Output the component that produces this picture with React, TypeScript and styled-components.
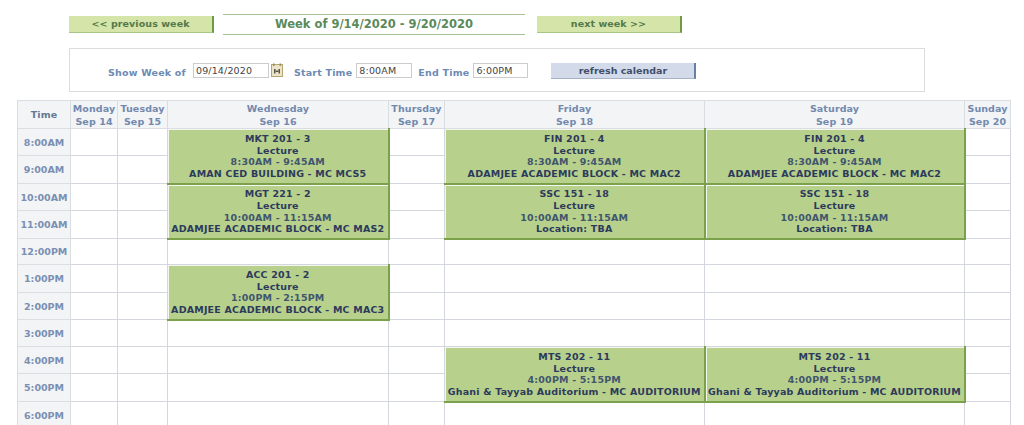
import styled, { createGlobalStyle } from "styled-components";

const GlobalStyle = createGlobalStyle`
  html, body {
    margin: 0;
    background: #fff;
    overflow: hidden;
  }
  body {
    font-family: "DejaVu Sans", Verdana, sans-serif;
    font-size: 9.5px;
    font-weight: bold;
  }
`;

const Page = styled.div`
  width: 1024px;
  height: 425px;
  overflow: hidden;
`;

const WeekNav = styled.div`
  display: flex;
  align-items: center;
  height: 21px;
  margin: 14px 0 0 69px;
`;

const NavButton = styled.div`
  box-sizing: border-box;
  width: 145px;
  height: 17px;
  line-height: 16px;
  letter-spacing: 0.08px;
  text-align: center;
  color: #54794a;
  background: #d5e4a8;
  border-right: 2px solid #6f9a4a;
  border-bottom: 1px solid #a9c487;
`;

const WeekTitle = styled.div`
  box-sizing: border-box;
  width: 302px;
  height: 21px;
  margin: 0 12px 0 9px;
  line-height: 19px;
  text-align: center;
  font-size: 11.5px;
  color: #5a8a5a;
  border-top: 1px solid #a6c296;
  border-bottom: 1px solid #a6c296;
`;

const FilterBox = styled.div`
  box-sizing: border-box;
  display: flex;
  align-items: center;
  width: 856px;
  height: 44px;
  margin: 13px 0 8px 69px;
  padding-left: 38px;
  border: 1px solid #dcdcdc;
`;

const FieldLabel = styled.span<{ $gap: number }>`
  margin: 4px 0 0 ${(p) => p.$gap}px;
  letter-spacing: 0.2px;
  color: #6d8bb5;
  white-space: nowrap;
`;

const TextBox = styled.div<{ $width: number; $gap: number }>`
  box-sizing: border-box;
  width: ${(p) => p.$width}px;
  height: 15px;
  margin-left: ${(p) => p.$gap}px;
  padding-left: 2px;
  line-height: 13px;
  font-size: 9.5px;
  font-weight: normal;
  letter-spacing: 0.15px;
  color: #444;
  border: 1px solid #cccccc;
`;

const CalendarIcon = styled.svg`
  width: 12px;
  height: 14px;
  margin-left: 2px;
`;

const RefreshButton = styled.div`
  box-sizing: border-box;
  width: 145px;
  height: 16px;
  margin: 2px 0 0 23px;
  line-height: 15px;
  text-align: center;
  color: #414f6b;
  background: #d3daea;
  border-right: 2px solid #6b7fa3;
  border-bottom: 1px solid #a6b2ca;
`;

const Calendar = styled.table`
  table-layout: fixed;
  width: 994px;
  margin-left: 17px;
  border-collapse: collapse;
  text-align: center;
`;

const HeadCell = styled.th`
  height: 27px;
  padding: 0;
  font-size: 9.5px;
  line-height: 13px;
  letter-spacing: 0.1px;
  color: #7289ae;
  background: #f3f4f6;
  border: 1px solid #dadde2;
`;

const TimeHead = styled(HeadCell)`
  color: #647892;
`;

const TimeCell = styled.td`
  padding: 0;
  color: #7a8fb2;
  background: #f3f4f6;
  border: 1px solid #dadde2;
`;

const Row = styled.tr<{ $height: number }>`
  height: ${(p) => p.$height}px;
`;

const Slot = styled.td`
  padding: 0;
  border: 1px solid #d3d6dc;
`;

const ClassCell = styled.td`
  padding: 1px 0 0;
  line-height: 11.7px;
  letter-spacing: 0.19px;
  color: #2d3a5c;
  background: #b7d08c;
  border: 1px solid #d3d6dc;
  border-right: 2px solid #7ba24a;
  border-bottom: 2px solid #7ba24a;
  box-shadow: inset 1px 1px 0 #f4f6f0;
  white-space: nowrap;
`;

const CourseTime = styled.span`
  color: #41566e;
`;

const days: [string, string, number][] = [
  ["Monday", "Sep 14", 47],
  ["Tuesday", "Sep 15", 50],
  ["Wednesday", "Sep 16", 221],
  ["Thursday", "Sep 17", 56],
  ["Friday", "Sep 18", 260],
  ["Saturday", "Sep 19", 260],
  ["Sunday", "Sep 20", 46],
];

type Course = { title: string; time: string; place: string };

const courses: Record<string, Course> = {
  mkt: { title: "MKT 201 - 3", time: "8:30AM - 9:45AM", place: "AMAN CED BUILDING - MC MCS5" },
  mgt: { title: "MGT 221 - 2", time: "10:00AM - 11:15AM", place: "ADAMJEE ACADEMIC BLOCK - MC MAS2" },
  acc: { title: "ACC 201 - 2", time: "1:00PM - 2:15PM", place: "ADAMJEE ACADEMIC BLOCK - MC MAC3" },
  fin: { title: "FIN 201 - 4", time: "8:30AM - 9:45AM", place: "ADAMJEE ACADEMIC BLOCK - MC MAC2" },
  ssc: { title: "SSC 151 - 18", time: "10:00AM - 11:15AM", place: "Location: TBA" },
  mts: { title: "MTS 202 - 11", time: "4:00PM - 5:15PM", place: "Ghani & Tayyab Auditorium - MC AUDITORIUM" },
};

// each row: label, height, then one entry per day column that starts here
// null = empty slot, string = course spanning two rows, "-" = covered by the span above
const rows: [string, number, (string | null)[]][] = [
  ["8:00AM", 27, [null, null, "mkt", null, "fin", "fin", null]],
  ["9:00AM", 28, [null, null, "-", null, "-", "-", null]],
  ["10:00AM", 27, [null, null, "mgt", null, "ssc", "ssc", null]],
  ["11:00AM", 28, [null, null, "-", null, "-", "-", null]],
  ["12:00PM", 26, [null, null, null, null, null, null, null]],
  ["1:00PM", 28, [null, null, "acc", null, null, null, null]],
  ["2:00PM", 27, [null, null, "-", null, null, null, null]],
  ["3:00PM", 27, [null, null, null, null, null, null, null]],
  ["4:00PM", 27, [null, null, null, null, "mts", "mts", null]],
  ["5:00PM", 28, [null, null, null, null, "-", "-", null]],
  ["6:00PM", 27, [null, null, null, null, null, null, null]],
];

export default function App() {
  return (
    <Page>
      <GlobalStyle />
      <WeekNav>
        <NavButton>&lt;&lt; previous week</NavButton>
        <WeekTitle>Week of 9/14/2020 - 9/20/2020</WeekTitle>
        <NavButton>next week &gt;&gt;</NavButton>
      </WeekNav>
      <FilterBox>
        <FieldLabel $gap={0}>Show Week of</FieldLabel>
        <TextBox $width={76} $gap={7}>09/14/2020</TextBox>
        <CalendarIcon viewBox="0 0 12 14">
          <rect x="0.5" y="1.5" width="11" height="12" fill="#ece4c8" stroke="#b3a672" />
          <rect x="2" y="0.5" width="1.5" height="2.5" fill="#9a8c58" />
          <rect x="8.5" y="0.5" width="1.5" height="2.5" fill="#9a8c58" />
          <rect x="3" y="6" width="1.5" height="4.5" fill="#5a5744" />
          <rect x="7.5" y="6" width="1.5" height="4.5" fill="#5a5744" />
          <rect x="4.5" y="7.5" width="3" height="1.5" fill="#5a5744" />
        </CalendarIcon>
        <FieldLabel $gap={11}>Start Time</FieldLabel>
        <TextBox $width={56} $gap={4}>8:00AM</TextBox>
        <FieldLabel $gap={6}>End Time</FieldLabel>
        <TextBox $width={55} $gap={4}>6:00PM</TextBox>
        <RefreshButton>refresh calendar</RefreshButton>
      </FilterBox>
      <Calendar>
        <colgroup>
          <col style={{ width: 53 }} />
          {days.map(([name, , width]) => (
            <col key={name} style={{ width }} />
          ))}
        </colgroup>
        <thead>
          <tr>
            <TimeHead>Time</TimeHead>
            {days.map(([name, date]) => (
              <HeadCell key={name}>
                {name}
                <br />
                {date}
              </HeadCell>
            ))}
          </tr>
        </thead>
        <tbody>
          {rows.map(([label, height, cells]) => (
            <Row key={label} $height={height}>
              <TimeCell>{label}</TimeCell>
              {cells.map((cell, i) => {
                if (cell === "-") return null;
                if (cell === null) return <Slot key={i} />;
                const course = courses[cell];
                return (
                  <ClassCell key={i} rowSpan={2}>
                    {course.title}
                    <br />
                    Lecture
                    <br />
                    <CourseTime>{course.time}</CourseTime>
                    <br />
                    {course.place}
                  </ClassCell>
                );
              })}
            </Row>
          ))}
        </tbody>
      </Calendar>
    </Page>
  );
}
